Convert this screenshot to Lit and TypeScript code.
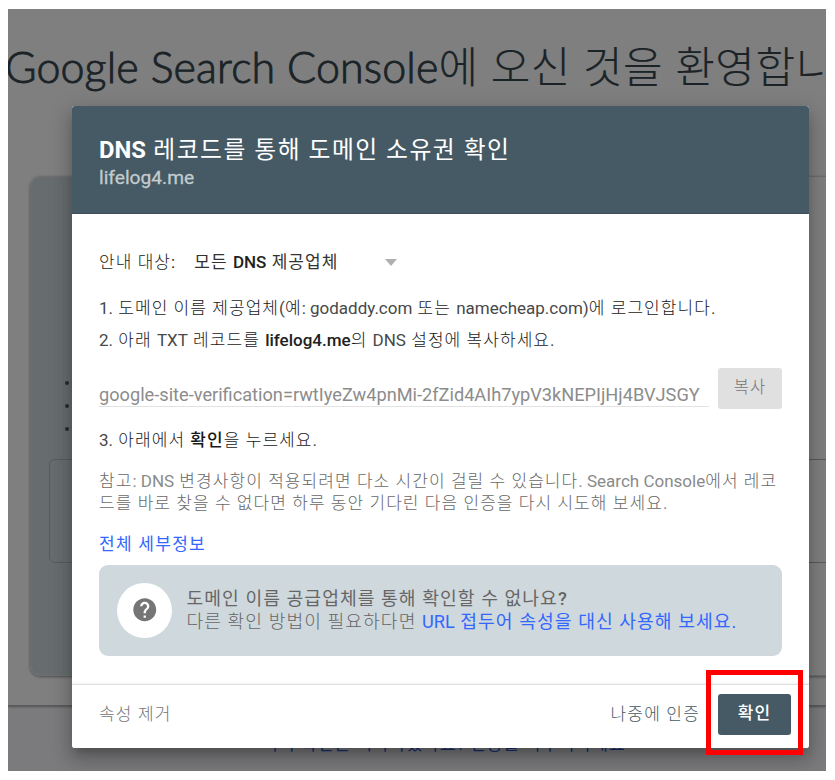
import { LitElement, html, css } from "lit";
import { customElement } from "lit/decorators.js";

/** Wraps each run of Hangul (with its spaces) so that it gets its own weight and tracking. */
const ko = (text: string) =>
  text
    .split(/(\s*[\uac00-\ud7a3][\uac00-\ud7a3\s]*)/)
    .filter((part) => part !== "")
    .map((part) => (/[\uac00-\ud7a3]/.test(part) ? html`<span class="ko">${part}</span>` : part));

@customElement("app-root")
export class AppRoot extends LitElement {
  static styles = css`
    :host {
      display: block;
      width: 835px;
      height: 780px;
      box-sizing: border-box;
      padding: 9px 0 0 8px;
      background: #fff;
      font: 400 17px/24px Roboto, "Noto Sans CJK KR", sans-serif;
      color: #212121;
    }
    * { box-sizing: border-box; }
    .ko { letter-spacing: 0.063em; font-weight: var(--ko-weight, 300); color: var(--ko-color, inherit); }
    b { font-weight: 500; color: #212121; --ko-weight: 500; }
    .stage { position: relative; width: 818px; height: 762px; overflow: hidden; background: #f6f7fd; }
    .page { height: 697px; background: #fff; border-bottom: 1px solid #b4b4b4; box-shadow: 0 1px 2px rgba(0,0,0,.35); overflow: hidden; }
    h1 {
      margin: 0;
      padding-top: 27px;
      height: 167px;
      white-space: nowrap;
      font: 300 43px/62px Lato, "Noto Sans CJK KR", sans-serif;
      letter-spacing: 0.12px;
      color: #37474f;
      margin-left: -3px;
      -webkit-text-stroke: 0.9px #37474f;
    }
    h1 .ko { letter-spacing: 0.5px; -webkit-text-stroke: 0.2px #37474f; }
    .cards { display: flex; height: 500px; margin-left: 22px; width: 900px; border-radius: 10px; border: 1px solid #dcdcdc; box-shadow: 0 1px 3px rgba(0,0,0,.4); }
    .card { width: 400px; padding: 194px 0 0 18px; background: #cfd8dc; border-radius: 9px 0 0 9px; }
    ul { list-style: none; margin: 0; padding: 0 0 0 16px; }
    li { height: 23px; display: flex; align-items: center; }
    li::before { content: ""; width: 4px; height: 4px; border-radius: 50%; background: #455a64; }
    .field { margin-top: 19px; height: 104px; width: 850px; border: 1px solid #b0b7ba; border-radius: 6px; }
    .resume { margin: 26px 0 0; padding-left: 54px; text-align: center; color: #2a62e8; --ko-weight: 400; }
    .scrim { position: absolute; inset: 0; background: rgba(0, 0, 0, 0.5); }
    .dialog {
      position: absolute;
      left: 64px;
      top: 96.5px;
      width: 737px;
      height: 642.5px;
      display: flex;
      flex-direction: column;
      background: #fff;
      border-radius: 3px;
      overflow: hidden;
    }
    .shadow { overflow: visible; box-shadow: 0 12px 17px 2px rgba(0,0,0,.14), 0 5px 22px 4px rgba(0,0,0,.12), 0 7px 9px -4px rgba(0,0,0,.2); }
    header { height: 108.5px; flex: none; padding: 29.5px 27px 0; background: #455a64; color: #fff; border-bottom: 1px solid #3c4f58; }
    h2 { margin: 0; font-size: 23.8px; line-height: 30px; font-weight: 700; --ko-weight: 400; }
    .domain { font-size: 19.2px; line-height: 26px; color: #c3cbce; -webkit-text-stroke: 0.3px #c3cbce; }
    .body { flex: 1; padding: 35.5px 27px 0; white-space: nowrap; }
    .guide { display: flex; align-items: center; height: 24px; margin-bottom: 22.5px; }
    .pick { margin-left: 19px; font-weight: 500; --ko-weight: 400; --ko-color: #333; }
    .caret { margin-left: 46px; margin-top: 1px; width: 0; height: 0; border: 6.5px solid transparent; border-top: 7px solid #b0b0b0; border-bottom: 0; }
    .step { height: 24px; color: #484848; --ko-color: #181818; }
    .step + .step { margin-top: 8px; }
    .row { display: flex; justify-content: space-between; height: 41px; margin: 16px 0 19px; }
    .code { width: 610px; height: 39px; padding-top: 15px; font-size: 18.2px; line-height: 24px; color: #8c8c8c; border-bottom: 1.5px solid #e2e2e2; }
    button { font: inherit; border: 0; padding: 0; border-radius: 3px; }
    .copy { width: 64px; height: 41px; background: #e0e0e0; color: #757575; font-size: 16.5px; line-height: 36px; padding-bottom: 2px; }
    .note { margin-top: 17.5px; line-height: 22.5px; color: #8a8a8a; --ko-color: #686868; }
    .more { margin-top: 17.5px; }
    .more .ko { letter-spacing: 0.075em; }
    a { color: #3367ff; text-decoration: none; --ko-weight: 400; --ko-color: #3367ff; }
    .tip { display: flex; align-items: center; margin-top: 9px; width: 683px; height: 91px; padding: 0 0 1px 18px; background: #cfd8dc; border-radius: 9px; color: #666; font-size: 18.2px; line-height: 23px; }
    .tip .ko { letter-spacing: 0.058em; }
    .disc { width: 55px; height: 55px; margin-right: 14.5px; border-radius: 50%; background: #fff; display: flex; align-items: center; justify-content: center; }
    .disc svg { width: 27.5px; height: 27.5px; fill: #757575; }
    .tip strong { font-weight: 500; --ko-weight: 400; }
    footer { flex: none; height: 64px; padding: 0 18px 5px 27px; display: flex; align-items: center; border-top: 1.5px solid #e0e0e0; color: #757575; box-shadow: 0 -1px 2px rgba(0,0,0,.06); }
    footer span { padding-bottom: 1px; }
    footer .ko { letter-spacing: 0.07em; padding: 0; }
    .later { margin-left: auto; margin-right: 18px; color: #455a64; }
    .ok { width: 73px; height: 41px; padding-bottom: 2px; background: #455a64; color: #fff; --ko-weight: 500; }
    .mark { position: absolute; left: 698px; top: 661px; width: 97px; height: 85px; border: 5px solid #f00; }
  `;

  render() {
    return html`
      <div class="stage">
        <div class="page">
          <h1>Google Search Console${ko("에 오신 것을 환영합니다")}</h1>
          <div class="cards">
            <div class="card">
              <ul><li></li><li></li><li></li></ul>
              <div class="field"></div>
            </div>
          </div>
        </div>
        <p class="resume">${ko("이미 확인은 시작하셨나요? 인증을 마무리하세요")}</p>
        <div class="scrim"></div>
        <div class="dialog shadow"></div>
        <div class="dialog">
          <header>
            <h2>DNS${ko(" 레코드를 통해 도메인 소유권 확인")}</h2>
            <div class="domain">lifelog4.me</div>
          </header>
          <div class="body">
            <div class="guide">
              <span>${ko("안내 대상:")}</span>
              <span class="pick">${ko("모든 DNS 제공업체")}</span>
              <i class="caret"></i>
            </div>
            <div class="step">${ko("1. 도메인 이름 제공업체(예: godaddy.com 또는 namecheap.com)에 로그인합니다.")}</div>
            <div class="step">${ko("2. 아래 TXT 레코드를 ")}<b>lifelog4.me</b>${ko("의 DNS 설정에 복사하세요.")}</div>
            <div class="row">
              <div class="code">google-site-verification=rwtIyeZw4pnMi-2fZid4AIh7ypV3kNEPIjHj4BVJSGY</div>
              <button class="copy">${ko("복사")}</button>
            </div>
            <div class="step">${ko("3. 아래에서 ")}<b>${ko("확인")}</b>${ko("을 누르세요.")}</div>
            <div class="note">
              ${ko("참고: DNS 변경사항이 적용되려면 다소 시간이 걸릴 수 있습니다. Search Console에서 레코")}<br />${ko("드를 바로 찾을 수 없다면 하루 동안 기다린 다음 인증을 다시 시도해 보세요.")}
            </div>
            <div class="more"><a>${ko("전체 세부정보")}</a></div>
            <div class="tip">
              <span class="disc">
                <svg viewBox="0 0 24 24"><path d="M12 2C6.48 2 2 6.48 2 12s4.48 10 10 10 10-4.48 10-10S17.52 2 12 2zm1 17h-2v-2h2v2zm2.07-7.75l-.9.92C13.45 12.9 13 13.5 13 15h-2v-.5c0-1.1.45-2.1 1.17-2.83l1.24-1.26c.37-.36.59-.86.59-1.41 0-1.1-.9-2-2-2s-2 .9-2 2H8c0-2.21 1.79-4 4-4s4 1.79 4 4c0 .88-.36 1.68-.93 2.25z" /></svg>
              </span>
              <div>
                <strong>${ko("도메인 이름 공급업체를 통해 확인할 수 없나요?")}</strong><br />${ko("다른 확인 방법이 필요하다면 ")}<a>${ko("URL 접두어 속성을 대신 사용해 보세요.")}</a>
              </div>
            </div>
          </div>
          <footer>
            <span>${ko("속성 제거")}</span>
            <span class="later">${ko("나중에 인증")}</span>
            <button class="ok">${ko("확인")}</button>
          </footer>
        </div>
        <div class="mark"></div>
      </div>
    `;
  }
}
